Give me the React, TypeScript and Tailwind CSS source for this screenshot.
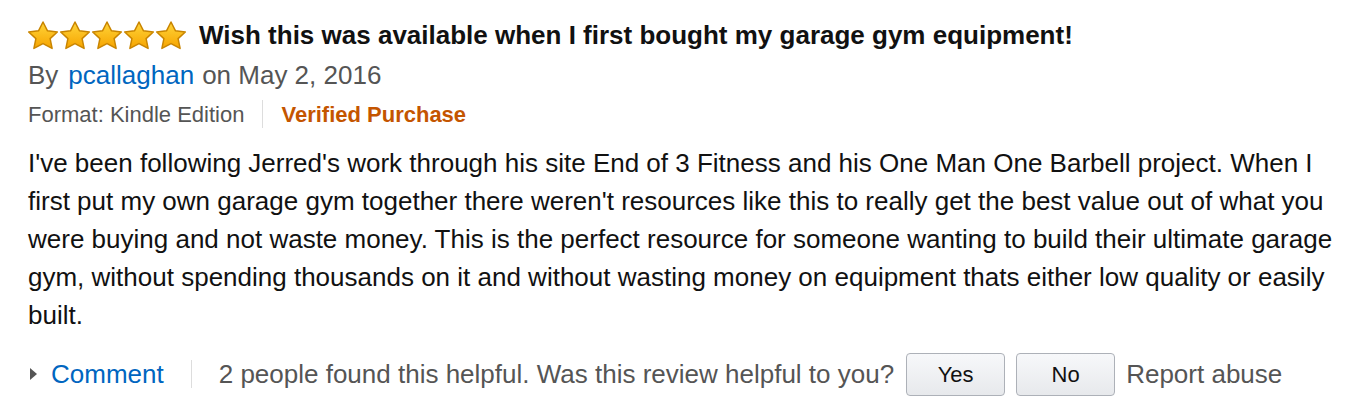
import React from "react";

function Star() {
  return (
    <svg width="32" height="31" viewBox="0 0 32 31">
      <defs>
        <linearGradient id="sg" x1="0" y1="0" x2="0" y2="1">
          <stop offset="0" stopColor="#ffd53a" />
          <stop offset="1" stopColor="#f6a400" />
        </linearGradient>
      </defs>
      <path
        d="M16 2 L20.5 10.8 L30.3 12 L23.1 18.6 L25.1 28.4 L16 23.6 L6.9 28.4 L8.9 18.6 L1.7 12 L11.5 10.8 Z"
        fill="url(#sg)"
        stroke="#c98500"
        strokeWidth="1.5"
        strokeLinejoin="round"
      />
    </svg>
  );
}

export default function App() {
  const font = { fontFamily: '"Liberation Sans", Arial, sans-serif' };
  return (
    <div className="w-[1372px] h-[414px] bg-white pl-[28px] pt-[18px]" style={font}>
      <div className="flex items-center h-[34px]">
        <div className="flex -ml-[1px]">
          <Star />
          <Star />
          <Star />
          <Star />
          <Star />
        </div>
        <span className="ml-[12px] text-[26px] font-bold text-[#111111] whitespace-nowrap">
          Wish this was available when I first bought my garage gym equipment!
        </span>
      </div>
      <div className="flex items-center h-[40px] text-[26px] text-[#555555] mt-[3px]">
        <span>By</span>
        <span className="ml-[10px] text-[#0066c0]">pcallaghan</span>
        <span className="ml-[8px]">on May 2, 2016</span>
      </div>
      <div className="flex items-center h-[38px] text-[22px]">
        <span className="text-[#555555]">Format: Kindle Edition</span>
        <span className="mx-[18px] w-px h-[28px] bg-[#dddddd]" />
        <span className="font-bold text-[#c45500]">Verified Purchase</span>
      </div>
      <div className="mt-[11px] text-[26px] leading-[38px] text-[#111111] whitespace-nowrap">
        I've been following Jerred's work through his site End of 3 Fitness and his One Man One Barbell project. When I
        <br />
        first put my own garage gym together there weren't resources like this to really get the best value out of what you
        <br />
        were buying and not waste money. This is the perfect resource for someone wanting to build their ultimate garage
        <br />
        gym, without spending thousands on it and without wasting money on equipment thats either low quality or easily
        <br />
        built.
      </div>
      <div className="flex items-center h-[44px] mt-[18px] text-[26px]">
        <span className="ml-[2px] w-0 h-0 border-y-[6px] border-y-transparent border-l-[7px] border-l-[#555555]" />
        <span className="ml-[14px] text-[#0066c0]">Comment</span>
        <span className="mx-[27px] w-px h-[28px] bg-[#dddddd]" />
        <span className="text-[#555555]">2 people found this helpful. Was this review helpful to you?</span>
        <button className="ml-[12px] w-[99px] h-[43px] rounded-[4px] border border-[#adb1b8] bg-gradient-to-b from-[#f7f8fa] to-[#e7e9ec] text-[22px] text-[#111111]">
          Yes
        </button>
        <button className="ml-[11px] w-[99px] h-[43px] rounded-[4px] border border-[#adb1b8] bg-gradient-to-b from-[#f7f8fa] to-[#e7e9ec] text-[22px] text-[#111111]">
          No
        </button>
        <span className="ml-[11px] text-[#555555]">Report abuse</span>
      </div>
    </div>
  );
}
